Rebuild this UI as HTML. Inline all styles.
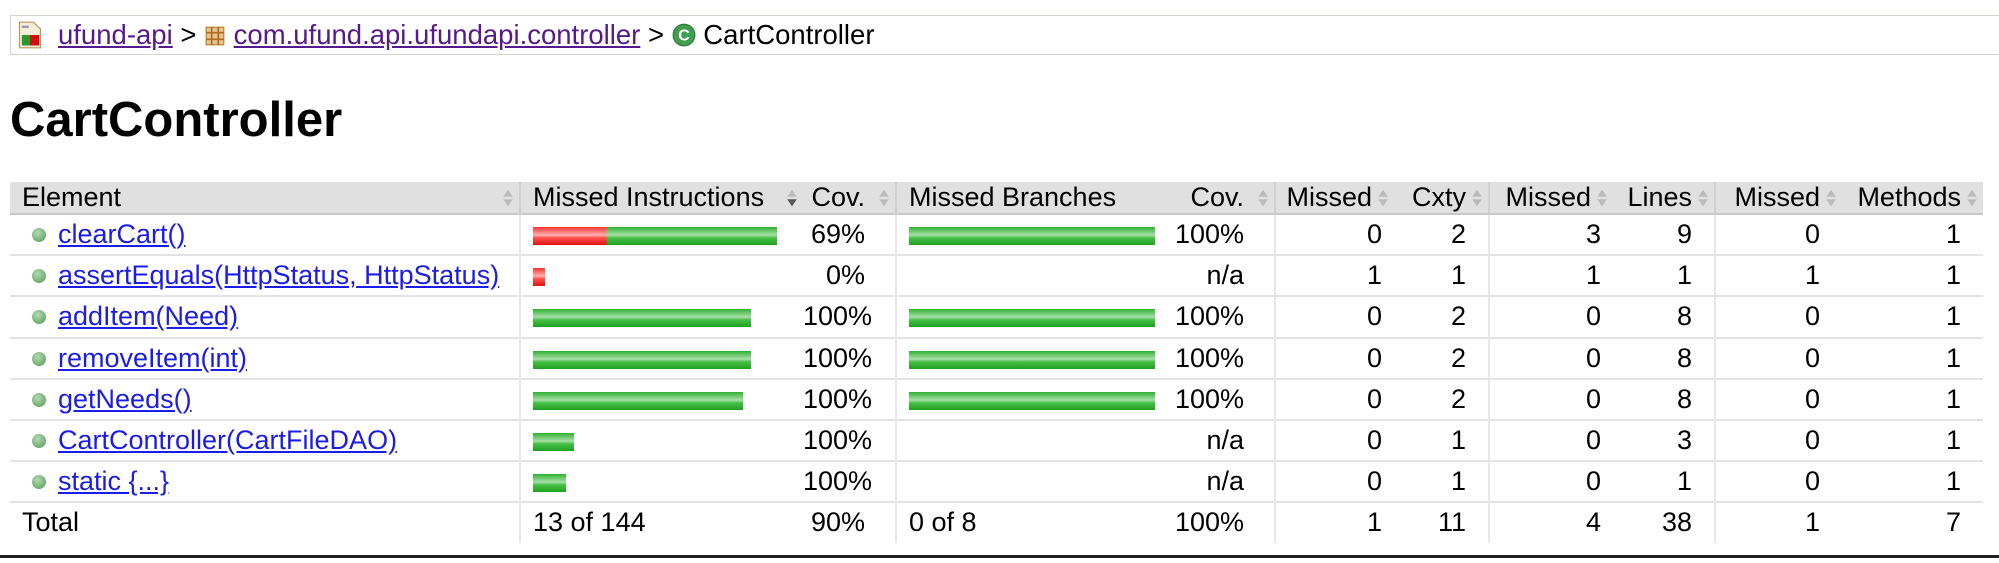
<!DOCTYPE html>
<html><head><meta charset="utf-8"><style>
html,body{margin:0;padding:0;background:#fff;width:1999px;height:563px;overflow:hidden;font-family:"Liberation Sans",Arial,sans-serif;}
.bc{position:absolute;left:10px;top:15px;width:1995px;height:40px;border:1px solid #d6d3ce;box-sizing:border-box;font-size:27.5px;line-height:38px;padding-left:47px;color:#000;white-space:nowrap}
.bc a{color:#551a8b;text-decoration:underline}
h1{position:absolute;left:10px;top:92px;margin:0;font-size:49px;font-weight:bold;line-height:56px}
table{position:absolute;left:10px;top:182px;border-collapse:collapse;table-layout:fixed;width:1973px;font-size:27px}
td{height:39.2px;padding:0;border-top:2px solid #e3e3e3;white-space:nowrap;vertical-align:middle}
thead td{height:30px;background:#e0e0e0;border-top:none;border-bottom:2px solid #c8c8c8;position:relative}
td.l{padding-left:12px}
td.r{text-align:right;padding-right:22px}
td.c{padding-right:30px}
td.mm{padding-right:12px}
thead td.mm{padding-right:22px}
td.b{border-left:2px solid #e8e8e8}
thead td.b{border-left:2px solid #d0d0d0}
.s{position:absolute;right:5px;top:6px;width:12px;height:20px}
a.m{color:#1c1ce8;text-decoration:underline}
.dot{display:inline-block;width:14px;height:14px;border-radius:50%;background:radial-gradient(circle at 40% 35%,#b4d8b4,#4f9a4f);margin:0 12px 0 22px;vertical-align:1px}
.bar{display:inline-block;height:18px;vertical-align:middle}
.g{background:linear-gradient(#2fb02f,#a8e0a8 45%,#48c048 60%,#1fa01f)}
.rd{background:linear-gradient(#ff3030,#ffb0b0 45%,#ff5050 60%,#e01010)}
.line{position:absolute;left:0;top:555px;width:1999px;height:3px;background:#222}
</style></head><body>
<div class="bc">
<svg style="position:absolute;left:6px;top:5px" width="26" height="28" viewBox="0 0 22 24"><path d="M2 1h12l6 6v16H2z" fill="#f4edd8" stroke="#b59a5a"/><rect x="4" y="12" width="8" height="9" fill="#2a9a2a"/><rect x="11" y="12" width="8" height="9" fill="#d01010"/><rect x="4" y="4" width="6" height="2" fill="#99a"/></svg>
<a>ufund-api</a> &gt; <svg style="vertical-align:-3px" width="22" height="22" viewBox="0 0 20 20"><rect x="2" y="2" width="16" height="16" fill="#e8c690" stroke="#b07a30"/><path d="M7 2v16M13 2v16M2 7h16M2 13h16" stroke="#b06a20" stroke-width="1.5"/></svg> <a>com.ufund.api.ufundapi.controller</a> &gt; <svg style="vertical-align:-3px" width="24" height="24" viewBox="0 0 21 21"><circle cx="10.5" cy="10.5" r="9.5" fill="#3f9f4f" stroke="#2d7a3a"/><text x="10.5" y="15.5" font-size="14" font-weight="bold" text-anchor="middle" fill="#fff" font-family="Liberation Sans">C</text></svg> CartController
</div>
<h1>CartController</h1>
<table>
<colgroup><col style="width:510px"><col style="width:283px"><col style="width:93px"><col style="width:267px"><col style="width:112px"><col style="width:119px"><col style="width:95px"><col style="width:124px"><col style="width:102px"><col style="width:127px"><col style="width:141px"></colgroup>
<thead><tr>
<td class="l">Element<svg class="s" viewBox="0 0 10 16"><path d="M5 1L9 7H1zM5 15L9 9H1z" fill="#bbb"/></svg></td>
<td class="l b">Missed Instructions<svg class="s" viewBox="0 0 10 16"><path d="M5 1L9 7H1z" fill="#bbb"/><path d="M5 15L9 9H1z" fill="#555"/></svg></td>
<td class="r c">Cov.<svg class="s" viewBox="0 0 10 16"><path d="M5 1L9 7H1zM5 15L9 9H1z" fill="#bbb"/></svg></td>
<td class="l b">Missed Branches<svg class="s" style="right:-20px" viewBox="0 0 10 16"><path d="M5 1L9 7H1zM5 15L9 9H1z" fill="#bbb"/></svg></td>
<td class="r c">Cov.<svg class="s" viewBox="0 0 10 16"><path d="M5 1L9 7H1zM5 15L9 9H1z" fill="#bbb"/></svg></td>
<td class="r b mm">Missed<svg class="s" viewBox="0 0 10 16"><path d="M5 1L9 7H1zM5 15L9 9H1z" fill="#bbb"/></svg></td>
<td class="r">Cxty<svg class="s" viewBox="0 0 10 16"><path d="M5 1L9 7H1zM5 15L9 9H1z" fill="#bbb"/></svg></td>
<td class="r b mm">Missed<svg class="s" viewBox="0 0 10 16"><path d="M5 1L9 7H1zM5 15L9 9H1z" fill="#bbb"/></svg></td>
<td class="r">Lines<svg class="s" viewBox="0 0 10 16"><path d="M5 1L9 7H1zM5 15L9 9H1z" fill="#bbb"/></svg></td>
<td class="r b">Missed<svg class="s" viewBox="0 0 10 16"><path d="M5 1L9 7H1zM5 15L9 9H1z" fill="#bbb"/></svg></td>
<td class="r">Methods<svg class="s" viewBox="0 0 10 16"><path d="M5 1L9 7H1zM5 15L9 9H1z" fill="#bbb"/></svg></td>
</tr></thead>
<tbody>
<tr><td><span class="dot"></span><a class="m">clearCart()</a></td><td class="l b"><span class="bar rd" style="width:74px"></span><span class="bar g" style="width:170px"></span></td><td class="r c">69%</td><td class="l b"><span class="bar g" style="width:246px"></span></td><td class="r c">100%</td><td class="r b mm">0</td><td class="r">2</td><td class="r b mm">3</td><td class="r">9</td><td class="r b">0</td><td class="r">1</td></tr>
<tr><td><span class="dot"></span><a class="m">assertEquals(HttpStatus, HttpStatus)</a></td><td class="l b"><span class="bar rd" style="width:12px"></span></td><td class="r c">0%</td><td class="l b"></td><td class="r c">n/a</td><td class="r b mm">1</td><td class="r">1</td><td class="r b mm">1</td><td class="r">1</td><td class="r b">1</td><td class="r">1</td></tr>
<tr><td><span class="dot"></span><a class="m">addItem(Need)</a></td><td class="l b"><span class="bar g" style="width:218px"></span></td><td class="r c">100%</td><td class="l b"><span class="bar g" style="width:246px"></span></td><td class="r c">100%</td><td class="r b mm">0</td><td class="r">2</td><td class="r b mm">0</td><td class="r">8</td><td class="r b">0</td><td class="r">1</td></tr>
<tr><td><span class="dot"></span><a class="m">removeItem(int)</a></td><td class="l b"><span class="bar g" style="width:218px"></span></td><td class="r c">100%</td><td class="l b"><span class="bar g" style="width:246px"></span></td><td class="r c">100%</td><td class="r b mm">0</td><td class="r">2</td><td class="r b mm">0</td><td class="r">8</td><td class="r b">0</td><td class="r">1</td></tr>
<tr><td><span class="dot"></span><a class="m">getNeeds()</a></td><td class="l b"><span class="bar g" style="width:210px"></span></td><td class="r c">100%</td><td class="l b"><span class="bar g" style="width:246px"></span></td><td class="r c">100%</td><td class="r b mm">0</td><td class="r">2</td><td class="r b mm">0</td><td class="r">8</td><td class="r b">0</td><td class="r">1</td></tr>
<tr><td><span class="dot"></span><a class="m">CartController(CartFileDAO)</a></td><td class="l b"><span class="bar g" style="width:41px"></span></td><td class="r c">100%</td><td class="l b"></td><td class="r c">n/a</td><td class="r b mm">0</td><td class="r">1</td><td class="r b mm">0</td><td class="r">3</td><td class="r b">0</td><td class="r">1</td></tr>
<tr><td><span class="dot"></span><a class="m">static {...}</a></td><td class="l b"><span class="bar g" style="width:33px"></span></td><td class="r c">100%</td><td class="l b"></td><td class="r c">n/a</td><td class="r b mm">0</td><td class="r">1</td><td class="r b mm">0</td><td class="r">1</td><td class="r b">0</td><td class="r">1</td></tr>
<tr><td class="l">Total</td><td class="l b">13 of 144</td><td class="r c">90%</td><td class="l b">0 of 8</td><td class="r c">100%</td><td class="r b mm">1</td><td class="r">11</td><td class="r b mm">4</td><td class="r">38</td><td class="r b">1</td><td class="r">7</td></tr>
</tbody></table>
<div class="line"></div>
</body></html>
